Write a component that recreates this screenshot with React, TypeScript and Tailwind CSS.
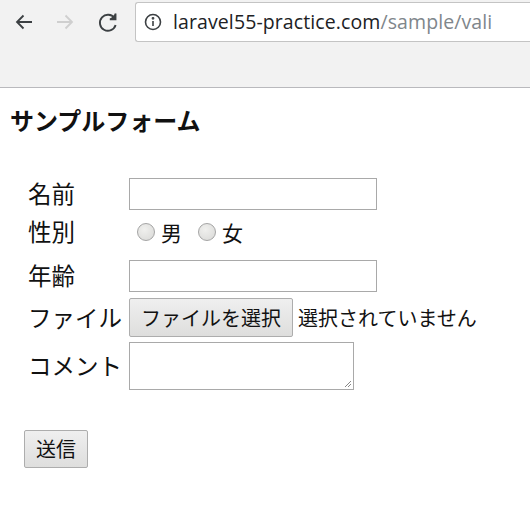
import React from 'react';

const jp = "font-['Noto_Sans_CJK_JP',sans-serif]";

const Radio: React.FC<{ label: string }> = ({ label }) => (
  <label className="flex items-center">
    <span className="w-[18px] h-[18px] rounded-full border border-[#a4a4a4] bg-[radial-gradient(circle_at_40%_35%,#f0f0ee,#d8d8d6)]" />
    <span className="ml-[6px] text-[21px] leading-none text-[#111]">{label}</span>
  </label>
);

const Row: React.FC<{ label: string; className?: string; children: React.ReactNode }> = ({
  label,
  className = '',
  children,
}) => (
  <div className={`flex items-center ${className}`}>
    <div className="w-[101px] text-[23.5px] leading-none text-[#111]">{label}</div>
    <div className="flex items-center">{children}</div>
  </div>
);

export default function App() {
  return (
    <div className={`w-[530px] h-[506px] bg-white overflow-hidden ${jp}`}>
      {/* browser chrome */}
      <div className="h-[88px] bg-[#f2f2f2] border-b border-[#b9b9bd]">
        <div className="flex items-center h-[42px] pt-[2px]">
          <svg className="ml-[14px]" width="20" height="20" viewBox="0 0 20 20" fill="none" stroke="#3c4043" strokeWidth="1.8">
            <path d="M18 10H3M9.5 3.5L3 10l6.5 6.5" />
          </svg>
          <svg className="ml-[21px]" width="20" height="20" viewBox="0 0 20 20" fill="none" stroke="#cfcfcf" strokeWidth="1.8">
            <path d="M2 10h15M10.5 3.5L17 10l-6.5 6.5" />
          </svg>
          <svg className="ml-[22px]" width="22" height="22" viewBox="0 0 22 22" fill="none" stroke="#3c4043" strokeWidth="1.9">
            <path d="M17.5 7.2A8 8 0 1 0 18.6 14" />
            <path d="M18.5 2.5v5.7h-5.7" fill="#3c4043" />
          </svg>
          <div className="ml-[16px] flex-1 h-[40px] bg-white border border-[#c4c4c4] border-r-0 rounded-l-[3px] flex items-center">
            <svg className="ml-[8px]" width="18" height="18" viewBox="0 0 18 18" fill="none" stroke="#3c4043" strokeWidth="1.6">
              <circle cx="9" cy="9" r="7.5" />
              <path d="M9 8v5" />
              <circle cx="9" cy="5.3" r="0.6" fill="#3c4043" />
            </svg>
            <span className="ml-[11px] text-[19.5px] font-['Open_Sans',sans-serif] tracking-[0.1px] text-[#202124] whitespace-nowrap">
              laravel55-practice.com<span className="text-[#80868b]">/sample/vali</span>
            </span>
          </div>
        </div>
      </div>

      {/* page */}
      <div className="pt-[18px] pl-[10px]">
        <h3 className="text-[24px] font-bold leading-[28px] text-[#111]">サンプルフォーム</h3>
      </div>

      <form className="pl-[28px] pt-[44px]">
        <Row label="名前" className="h-[32px]">
          <input className="w-[248px] h-[32px] border border-[#a9a9a9] bg-white" />
        </Row>
        <Row label="性別" className="h-[38px] mt-[3px]">
          <div className="flex items-center gap-[16px] pl-[8px]">
            <Radio label="男" />
            <Radio label="女" />
          </div>
        </Row>
        <Row label="年齢" className="h-[32px] mt-[9px]">
          <input className="w-[248px] h-[32px] border border-[#a9a9a9] bg-white" />
        </Row>
        <Row label="ファイル" className="h-[39px] mt-[6px]">
          <button
            type="button"
            className="h-[39px] px-[11px] border border-[#adadad] rounded-[2px] bg-[linear-gradient(#efefef,#dededd)] text-[20px] leading-none text-[#111]"
          >
            ファイルを選択
          </button>
          <span className="ml-[5px] text-[20px] leading-none text-[#111]">選択されていません</span>
        </Row>
        <Row label="コメント" className="h-[48px] mt-[5px]">
          <div className="relative w-[225px] h-[48px] border border-[#a9a9a9] bg-white">
            <svg className="absolute right-[1px] bottom-[1px]" width="8" height="8" viewBox="0 0 8 8" stroke="#888" strokeWidth="1">
              <path d="M7 1L1 7M7 4L4 7" />
            </svg>
          </div>
        </Row>
        <div className="mt-[40px] -ml-[4px]">
          <button
            type="button"
            className="w-[64px] h-[38px] border border-[#adadad] rounded-[2px] bg-[linear-gradient(#efefef,#dededd)] text-[20px] leading-none text-[#111]"
          >
            送信
          </button>
        </div>
      </form>
    </div>
  );
}
